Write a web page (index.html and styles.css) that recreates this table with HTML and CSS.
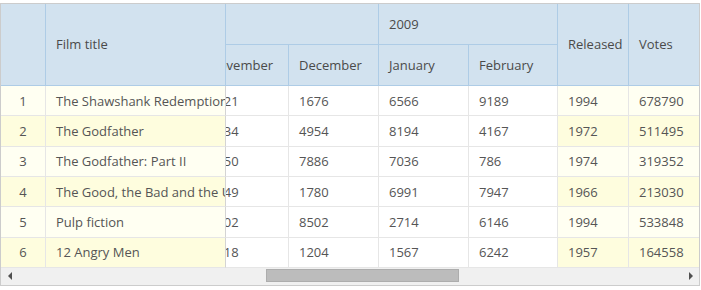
FILE: index.html
```html
<!DOCTYPE html>
<html>
<head>
<meta charset="utf-8">
<link rel="stylesheet" href="styles.css">
</head>
<body>
<div class="grid">
  <div class="main">
    <div class="left">
      <div class="head">
        <div class="hcell c-no"></div>
        <div class="hcell c-title">Film title</div>
      </div>
      <div class="body">
        <div class="row odd"><div class="cell c-no center-t">1</div><div class="cell c-title">The Shawshank Redemption</div></div>
        <div class="row even"><div class="cell c-no center-t">2</div><div class="cell c-title">The Godfather</div></div>
        <div class="row odd"><div class="cell c-no center-t">3</div><div class="cell c-title">The Godfather: Part II</div></div>
        <div class="row even"><div class="cell c-no center-t">4</div><div class="cell c-title">The Good, the Bad and the Ugly</div></div>
        <div class="row odd"><div class="cell c-no center-t">5</div><div class="cell c-title">Pulp fiction</div></div>
        <div class="row even"><div class="cell c-no center-t">6</div><div class="cell c-title">12 Angry Men</div></div>
      </div>
    </div>
    <div class="mid">
      <div class="track">
        <div class="hrow">
          <div class="hcell span2"></div>
          <div class="hcell span2">2009</div>
        </div>
        <div class="hrow">
          <div class="hcell c-m">November</div>
          <div class="hcell c-m">December</div>
          <div class="hcell c-m">January</div>
          <div class="hcell c-m">February</div>
        </div>
        <div class="body">
          <div class="row"><div class="cell c-m">7121</div><div class="cell c-m">1676</div><div class="cell c-m">6566</div><div class="cell c-m">9189</div></div>
          <div class="row"><div class="cell c-m">5434</div><div class="cell c-m">4954</div><div class="cell c-m">8194</div><div class="cell c-m">4167</div></div>
          <div class="row"><div class="cell c-m">3650</div><div class="cell c-m">7886</div><div class="cell c-m">7036</div><div class="cell c-m">786</div></div>
          <div class="row"><div class="cell c-m">2149</div><div class="cell c-m">1780</div><div class="cell c-m">6991</div><div class="cell c-m">7947</div></div>
          <div class="row"><div class="cell c-m">9302</div><div class="cell c-m">8502</div><div class="cell c-m">2714</div><div class="cell c-m">6146</div></div>
          <div class="row"><div class="cell c-m">4218</div><div class="cell c-m">1204</div><div class="cell c-m">1567</div><div class="cell c-m">6242</div></div>
        </div>
      </div>
    </div>
    <div class="right">
      <div class="head">
        <div class="hcell c-rel">Released</div>
        <div class="hcell c-votes">Votes</div>
      </div>
      <div class="body">
        <div class="row odd"><div class="cell c-rel">1994</div><div class="cell c-votes">678790</div></div>
        <div class="row even"><div class="cell c-rel">1972</div><div class="cell c-votes">511495</div></div>
        <div class="row odd"><div class="cell c-rel">1974</div><div class="cell c-votes">319352</div></div>
        <div class="row even"><div class="cell c-rel">1966</div><div class="cell c-votes">213030</div></div>
        <div class="row odd"><div class="cell c-rel">1994</div><div class="cell c-votes">533848</div></div>
        <div class="row even"><div class="cell c-rel">1957</div><div class="cell c-votes">164558</div></div>
      </div>
    </div>
  </div>
  <div class="hscroll">
    <div class="arrow"><span class="tri-left"></span></div>
    <div class="strack"><div class="thumb" style="margin-left:248px;width:193px"></div></div>
    <div class="arrow"><span class="tri-right"></span></div>
  </div>
</div>
</body>
</html>
```

FILE: styles.css
```css
* { box-sizing: border-box; }
body {
  margin: 0;
  padding-top: 3px;
  background: #ffffff;
  font-family: "Open Sans", "DejaVu Sans", sans-serif;
  font-size: 13px;
  color: #555555;
}
.grid {
  width: 700px;
  border: 1px solid #cccccc;
}
.main { display: flex; }
.left { width: 225px; flex: none; }
.mid { width: 331px; flex: none; overflow: hidden; }
.right { width: 142px; flex: none; }
.track { margin-left: -28px; width: 360px; }

.head { display: flex; height: 82px; }
.hrow { display: flex; height: 41px; }
.hcell {
  background: #d2e2ef;
  color: #4a4a4a;
  border-bottom: 1px solid #aecce6;
  display: flex;
  align-items: center;
  padding-left: 10px;
  white-space: nowrap;
  overflow: hidden;
}
.head .hcell { height: 82px; padding-bottom: 2px; }
.hrow .hcell { height: 41px; }

.c-no { width: 45px; border-right: 1px solid #aecce6; }
.c-title { width: 180px; border-right: 1px solid #aecce6; }
.c-m { width: 90px; border-left: 1px solid #aecce6; }
.span2 { width: 180px; border-left: 1px solid #aecce6; }
.c-rel { width: 72px; border-left: 1px solid #aecce6; border-right: 1px solid #aecce6; }
.c-votes { width: 70px; }

.row { display: flex; height: 30.33px; }
.cell {
  height: 100%;
  display: flex;
  align-items: center;
  padding-left: 10px;
  white-space: nowrap;
  overflow: hidden;
  border-bottom: 1px solid #e6e6e6;
  border-color: #e6e6e6;
}
.cell.c-no, .cell.c-title, .cell.c-m, .cell.c-rel { border-color: #e6e6e6; }
.cell.c-title { border-right-color: #d4d4d4; }
.center-t { justify-content: center; padding-left: 0; }
.row.odd .cell { background: #fffff2; }
.row.even .cell { background: #fefdde; }

.hscroll {
  display: flex;
  height: 17px;
  background: #f0f0f0;
}
.arrow {
  width: 17px;
  flex: none;
  display: flex;
  align-items: center;
  justify-content: center;
}
.tri-left, .tri-right {
  width: 0;
  height: 0;
  border-top: 4px solid transparent;
  border-bottom: 4px solid transparent;
}
.tri-left { border-right: 4px solid #505050; }
.tri-right { border-left: 4px solid #505050; }
.strack { flex: 1; display: flex; }
.thumb {
  margin-top: 1px;
  height: 13px;
  background: #bcbcbc;
  border: 1px solid #adadad;
}
```
